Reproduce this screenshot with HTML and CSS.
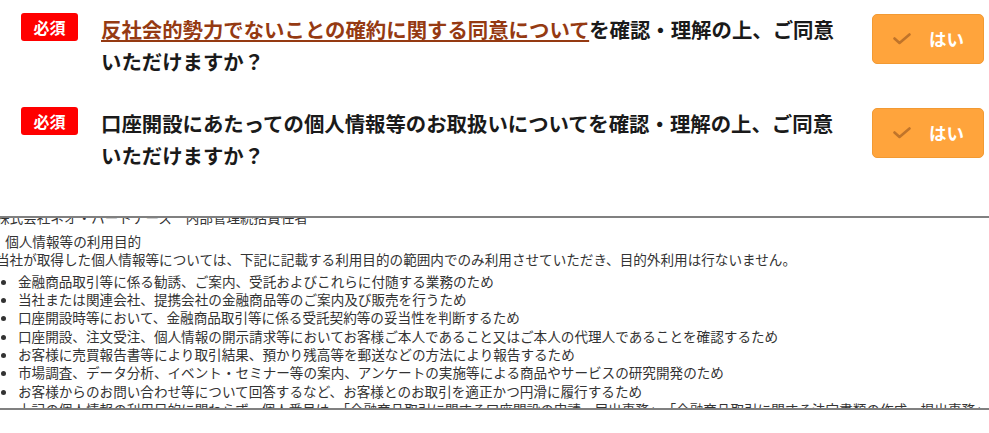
FILE: index.html
```html
<!DOCTYPE html>
<html lang="ja">
<head>
<meta charset="utf-8">
<title>同意確認</title>
<link rel="stylesheet" href="styles.css">
</head>
<body>
<div class="page">
  <div class="agree-list">
    <div class="agree-row">
      <span class="badge">必須</span>
      <p class="question"><a class="doc-link" href="#">反社会的勢力でないことの確約に関する同意について</a>を確認・理解の上、ご同意いただけますか？</p>
      <button class="yes-btn" type="button">
        <svg class="check" viewBox="0 0 18 12" width="18" height="12" aria-hidden="true"><path d="M1.5 5.5 L6.5 10 L16.5 1.5" fill="none" stroke="currentColor" stroke-width="2.6" stroke-linecap="round" stroke-linejoin="round"/></svg>
        <span class="yes-label">はい</span>
      </button>
    </div>
    <div class="agree-row">
      <span class="badge">必須</span>
      <p class="question">口座開設にあたっての個人情報等のお取扱いについてを確認・理解の上、ご同意いただけますか？</p>
      <button class="yes-btn" type="button">
        <svg class="check" viewBox="0 0 18 12" width="18" height="12" aria-hidden="true"><path d="M1.5 5.5 L6.5 10 L16.5 1.5" fill="none" stroke="currentColor" stroke-width="2.6" stroke-linecap="round" stroke-linejoin="round"/></svg>
        <span class="yes-label">はい</span>
      </button>
    </div>
  </div>

  <div class="doc-box">
    <div class="doc-content">
      <p class="doc-line doc-first">株式会社ネオ・パートナーズ　内部管理統括責任者</p>
      <p class="doc-heading">２．個人情報等の利用目的</p>
      <p class="doc-line">当社が取得した個人情報等については、下記に記載する利用目的の範囲内でのみ利用させていただき、目的外利用は行ないません。</p>
      <ul class="doc-bullets">
        <li>金融商品取引等に係る勧誘、ご案内、受託およびこれらに付随する業務のため</li>
        <li>当社または関連会社、提携会社の金融商品等のご案内及び販売を行うため</li>
        <li>口座開設時等において、金融商品取引等に係る受託契約等の妥当性を判断するため</li>
        <li>口座開設、注文受注、個人情報の開示請求等においてお客様ご本人であること又はご本人の代理人であることを確認するため</li>
        <li>お客様に売買報告書等により取引結果、預かり残高等を郵送などの方法により報告するため</li>
        <li>市場調査、データ分析、イベント・セミナー等の案内、アンケートの実施等による商品やサービスの研究開発のため</li>
        <li>お客様からのお問い合わせ等について回答するなど、お客様とのお取引を適正かつ円滑に履行するため</li>
        <li>上記の個人情報の利用目的に関わらず、個人番号は、「金融商品取引に関する口座開設の申請・届出事務」、「金融商品取引に関する法定書類の作成・提出事務」に限り利用します。</li>
      </ul>
    </div>
  </div>
</div>
</body>
</html>
```
FILE: styles.css
```css
html, body {
  margin: 0;
  padding: 0;
  background: #ffffff;
}

.page {
  font-family: "Noto Sans CJK JP", "Noto Sans", sans-serif;
  color: #1a1a1a;
}

.agree-list {
  display: flex;
  flex-direction: column;
  gap: 30px;
  padding: 13px 5px 0 21px;
}

.agree-row {
  display: grid;
  grid-template-columns: 57px 746px 112px;
  column-gap: 23px;
  align-items: start;
}

.agree-row .yes-btn {
  margin-left: 2px;
}

.badge {
  display: flex;
  align-items: center;
  justify-content: center;
  height: 28px;
  background: #ff0000;
  color: #ffffff;
  border-radius: 3px;
  font-size: 16px;
  font-weight: 700;
  line-height: 1;
}

.question {
  margin: 0;
  font-size: 20.4px;
  line-height: 32px;
  font-weight: 700;
  color: #1a1a1a;
}

.doc-link {
  color: #953a12;
  text-decoration: underline;
  text-decoration-thickness: 1.5px;
  text-underline-offset: 2px;
}

.yes-btn {
  display: flex;
  align-items: center;
  height: 50px;
  width: 112px;
  margin-top: 1px;
  padding: 0 0 0 20px;
  box-sizing: border-box;
  background: #ffa43c;
  border: 1px solid #f29a33;
  border-radius: 5px;
  font-family: inherit;
  cursor: pointer;
}

.check {
  color: #c0742a;
  flex: none;
}

.yes-label {
  margin-left: 18px;
  color: #ffffff;
  font-size: 17.5px;
  font-weight: 700;
  line-height: 1;
}

.doc-box {
  margin-top: 45px;
  height: 190px;
  border-top: 2px solid #808080;
  border-bottom: 2px solid #808080;
  overflow: hidden;
}

.doc-content {
  display: flow-root;
  margin: -9.8px 0 0 -4px;
  font-size: 13.6px;
  line-height: 18.3px;
  color: #333333;
  white-space: nowrap;
}

.doc-line {
  margin: 0;
}

.doc-first {
  margin: 0 0 5px 0;
}

.doc-heading {
  margin: 0 0 0 -18px;
}

.doc-bullets {
  margin: 3.7px 0 0 0;
  padding-left: 22px;
}

.doc-bullets li {
  list-style: disc;
}
```
